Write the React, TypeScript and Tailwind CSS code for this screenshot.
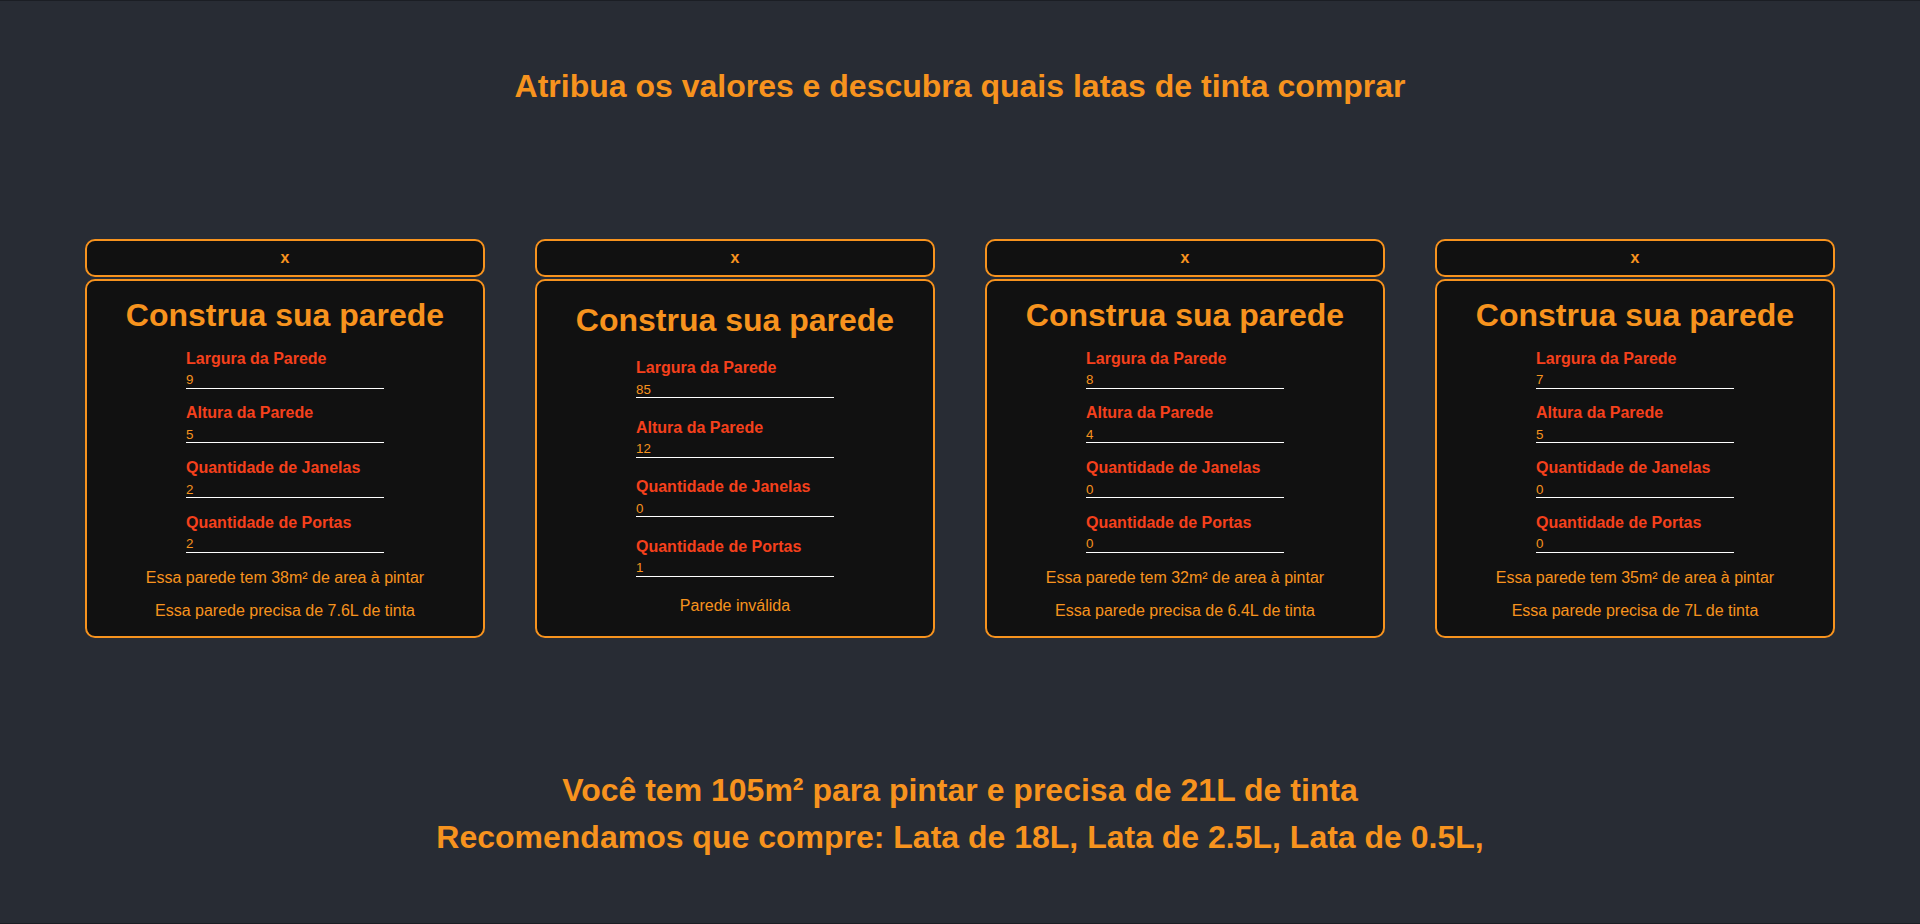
import React from "react";

type Wall = {
  largura: string;
  altura: string;
  janelas: string;
  portas: string;
  area?: number;
  tinta?: string;
  invalid?: boolean;
};

const walls: Wall[] = [
  { largura: "9", altura: "5", janelas: "2", portas: "2", area: 38, tinta: "7.6" },
  { largura: "85", altura: "12", janelas: "0", portas: "1", invalid: true },
  { largura: "8", altura: "4", janelas: "0", portas: "0", area: 32, tinta: "6.4" },
  { largura: "7", altura: "5", janelas: "0", portas: "0", area: 35, tinta: "7" },
];

function Field({ label, value }: { label: string; value: string }) {
  return (
    <div className="flex w-[198px] flex-col self-center text-left">
      <label className="text-[16px] leading-[normal] font-bold text-[#f5401c]">{label}</label>
      <input
        type="text"
        defaultValue={value}
        className="mt-[4px] h-[17px] w-full border-b border-white bg-transparent p-0 text-[13.33px] leading-[normal] text-[#f7931e] outline-none"
      />
    </div>
  );
}

function WallCard({ wall }: { wall: Wall }) {
  return (
    <div className="flex w-[400px] flex-col gap-[2px]">
      <button className="h-[38px] w-full rounded-[10px] border-2 border-[#f7931e] bg-[#111111] text-[16px] leading-[normal] font-bold text-[#f7931e]">
        x
      </button>
      <div className="flex h-[359px] w-full flex-col justify-evenly rounded-[10px] border-2 border-[#f7931e] bg-[#111111] text-center">
        <h2 className="text-[32px] leading-[normal] font-bold text-[#f7931e]">Construa sua parede</h2>
        <Field label="Largura da Parede" value={wall.largura} />
        <Field label="Altura da Parede" value={wall.altura} />
        <Field label="Quantidade de Janelas" value={wall.janelas} />
        <Field label="Quantidade de Portas" value={wall.portas} />
        {wall.invalid ? (
          <p className="text-[16px] leading-[normal] text-[#f7931e]">Parede inválida</p>
        ) : (
          <>
            <p className="text-[16px] leading-[normal] text-[#f7931e]">
              Essa parede tem {wall.area}m² de area à pintar
            </p>
            <p className="text-[16px] leading-[normal] text-[#f7931e]">
              Essa parede precisa de {wall.tinta}L de tinta
            </p>
          </>
        )}
      </div>
    </div>
  );
}

export default function App() {
  return (
    <div className="flex h-[924px] w-full flex-col items-center justify-around border-y border-[#1b1e24] bg-[#282c34] font-['Liberation_Sans',Arial,sans-serif]">
      <h1 className="text-[32px] leading-[normal] font-bold text-[#f7931e]">
        Atribua os valores e descubra quais latas de tinta comprar
      </h1>
      <div className="flex flex-row justify-center gap-[50px]">
        {walls.map((w, i) => (
          <WallCard key={i} wall={w} />
        ))}
      </div>
      <div className="flex flex-col items-center gap-[10px]">
        <h2 className="text-[32px] leading-[normal] font-bold text-[#f7931e]">
          Você tem 105m² para pintar e precisa de 21L de tinta
        </h2>
        <h2 className="text-[32px] leading-[normal] font-bold text-[#f7931e]">
          Recomendamos que compre: Lata de 18L, Lata de 2.5L, Lata de 0.5L,
        </h2>
      </div>
    </div>
  );
}
